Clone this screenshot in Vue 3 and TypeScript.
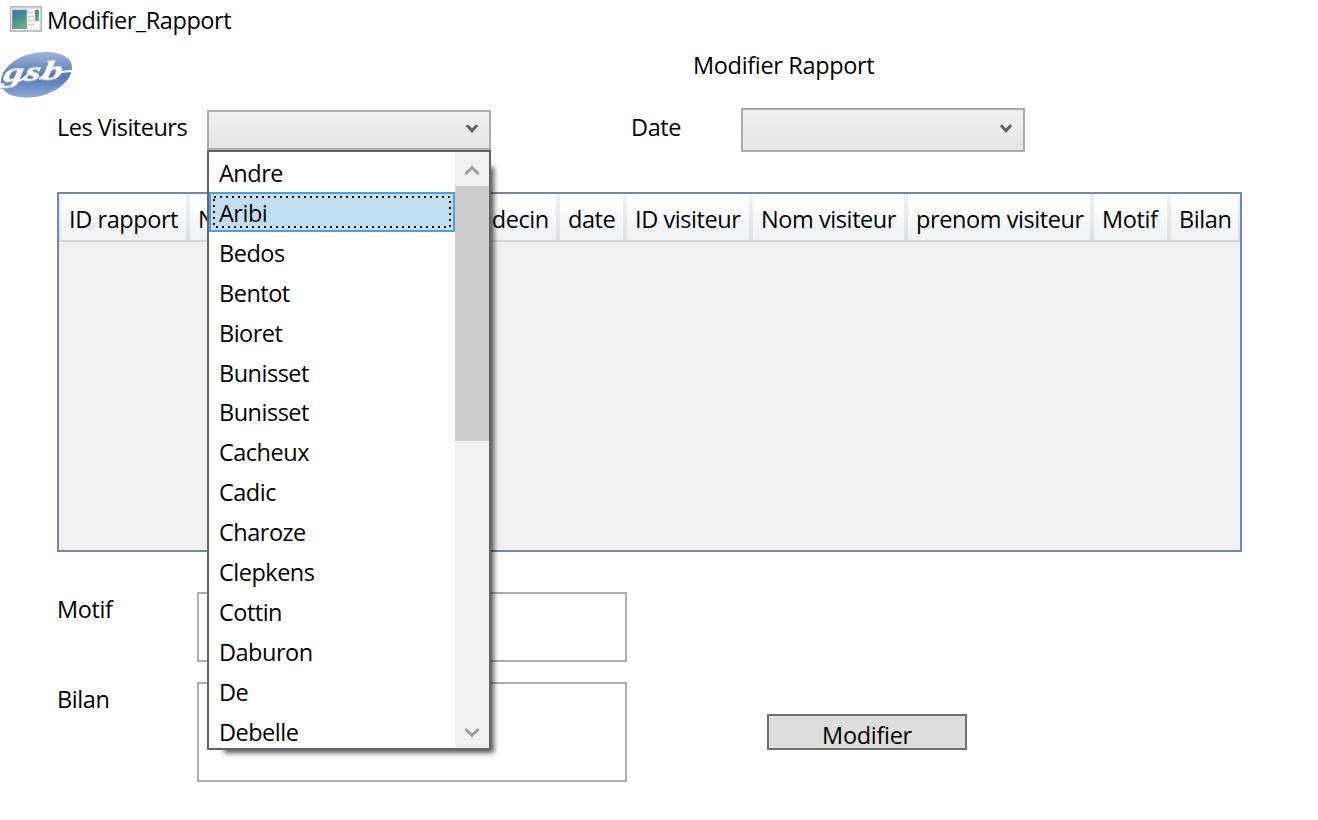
<script setup lang="ts">
import { ref } from 'vue'

interface Column {
  label: string
  width: number
}

const visitors: string[] = [
  'Andre', 'Aribi', 'Bedos', 'Bentot', 'Bioret', 'Bunisset', 'Bunisset', 'Cacheux',
  'Cadic', 'Charoze', 'Clepkens', 'Cottin', 'Daburon', 'De', 'Debelle',
]
const highlighted = ref<number>(1)

const columns: Column[] = [
  { label: 'ID rapport', width: 129 },
  { label: 'Nom medecin', width: 169 },
  { label: 'prenom medecin', width: 201 },
  { label: 'date', width: 67 },
  { label: 'ID visiteur', width: 126 },
  { label: 'Nom visiteur', width: 155 },
  { label: 'prenom visiteur', width: 186 },
  { label: 'Motif', width: 77 },
  { label: 'Bilan', width: 71 },
]
</script>

<template>
  <div class="window">
    <header class="titlebar">
      <svg class="app-icon" viewBox="0 0 32 26" width="32" height="26">
        <defs>
          <linearGradient id="pane" x1="0" y1="0" x2="0.5" y2="1">
            <stop offset="0" stop-color="#3c6fae" />
            <stop offset="0.5" stop-color="#47899c" />
            <stop offset="1" stop-color="#68b070" />
          </linearGradient>
        </defs>
        <rect x="0.75" y="0.75" width="30.5" height="24.5" fill="#dfe2e5" stroke="#b9bdc2" stroke-width="1.5" />
        <rect x="1.5" y="3" width="28" height="20.5" fill="#f5f6f6" />
        <rect x="2.5" y="4" width="14" height="18.5" fill="url(#pane)" stroke="#6b9bb0" stroke-width="0.8" />
        <path d="M18 6.5h6M18 10.5h6M18 14.5h6M18 18.5h6" stroke="#cfd2d5" stroke-width="1.3" />
        <rect x="25.2" y="4" width="3.6" height="11" fill="url(#pane)" />
      </svg>
      <span class="caption">Modifier_Rapport</span>
    </header>

    <div class="banner">
      <svg class="logo" viewBox="0 0 76 50" width="76" height="50">
        <defs>
          <linearGradient id="oval" x1="0" y1="0" x2="0" y2="1">
            <stop offset="0" stop-color="#9db5da" />
            <stop offset="0.55" stop-color="#5479b7" />
            <stop offset="1" stop-color="#8fa9d5" />
          </linearGradient>
        </defs>
        <path
          d="M1 31C2 16 21 2 45 2C62 2 72 8 72 17C72 34 49 47.500 27 47.500C10 47.500 0 41 1 31Z"
          fill="url(#oval)"
        />
        <g transform="translate(2.500 32) rotate(-3) skewX(-12) scale(1.5 1)">
          <text class="logo-text" x="0" y="0">gsb</text>
        </g>
        <path class="swash" d="M18 31Q24 30 31 21M39 29Q44 27 49 20M58 23Q62 21.500 73 21" />
      </svg>
      <h1>Modifier Rapport</h1>
    </div>

    <section class="filters">
      <label class="visitor-label">Les Visiteurs</label>
      <div class="picker">
        <div class="combo">
          <svg viewBox="0 0 12 10" width="12" height="10"><path d="M1 1.2L6 6.8L11 1.2" /></svg>
        </div>
        <div class="popup">
          <ul>
            <li
              v-for="(name, i) in visitors"
              :key="i"
              :class="{ active: i === highlighted }"
              @mouseenter="highlighted = i"
            >
              <svg v-if="i === highlighted" class="focus" width="238" height="32">
                <rect x="1" y="1" width="236" height="30" />
              </svg>
              <span>{{ name }}</span>
            </li>
          </ul>
          <div class="scrollbar">
            <svg viewBox="0 0 34 34" width="34" height="34"><path d="M10.5 22L17 15.5L23.5 22" /></svg>
            <div class="thumb"></div>
            <svg viewBox="0 0 34 34" width="34" height="34"><path d="M10.5 15L17 21.5L23.5 15" /></svg>
          </div>
        </div>
      </div>
      <label class="date-label">Date</label>
      <div class="combo date">
        <svg viewBox="0 0 12 10" width="12" height="10"><path d="M1 1.2L6 6.8L11 1.2" /></svg>
      </div>
    </section>

    <section class="grid">
      <div class="grid-head">
        <div v-for="c in columns" :key="c.label" class="cell" :style="{ width: c.width + 'px' }">
          {{ c.label }}
        </div>
      </div>
    </section>

    <section class="editor">
      <div class="fields">
        <label>Motif</label>
        <div class="box motif"></div>
        <label>Bilan</label>
        <div class="box bilan"></div>
      </div>
      <button type="button"><span>Modifier</span></button>
    </section>
  </div>
</template>

<style>
body {
  background: #fff;
  overflow: hidden;
}
</style>

<style scoped>
.window {
  box-sizing: border-box;
  width: 1318px;
  height: 820px;
  overflow: hidden;
  background: #fff;
  color: #000;
  font-family: "Open Sans", "Noto Sans", sans-serif;
  font-size: 23.5px;
  font-weight: 370;
  letter-spacing: -0.42px;
  line-height: 32px;
}
.titlebar {
  display: flex;
  height: 48px;
  padding: 6px 0 0 10px;
  box-sizing: border-box;
}
.caption {
  margin: -2px 0 0 5px;
}
.banner {
  display: flex;
  height: 60px;
}
.logo {
  margin-top: 2px;
}
.logo-text {
  font: italic bold 27px "Liberation Serif", serif;
  letter-spacing: 1px;
  fill: #fff;
  stroke: #fff;
  stroke-width: 0.4;
  filter: drop-shadow(0.6px 1px 0 #8b99b3);
}
.swash {
  fill: none;
  stroke: #fff;
  stroke-width: 2.2;
}
h1 {
  margin: 1px 0 0 617px;
  font-size: inherit;
  font-weight: inherit;
  letter-spacing: -0.34px;
}
.filters {
  display: grid;
  grid-template-columns: 150px 284px 140px 110px 284px;
  padding-left: 57px;
  height: 84px;
}
.visitor-label,
.date-label {
  padding-top: 3px;
}
.visitor-label {
  letter-spacing: -0.5px;
}
.date-label {
  grid-column: 4;
}
.picker {
  position: relative;
  padding-top: 2px;
}
.combo {
  box-sizing: border-box;
  display: flex;
  align-items: center;
  justify-content: flex-end;
  width: 284px;
  height: 40px;
  padding: 0 11px 2px 0;
  border: 2px solid #acacac;
  background: linear-gradient(#f0f0f0, #e5e5e5);
}
.combo.date {
  height: 44px;
}
.combo path {
  fill: none;
  stroke: #606060;
  stroke-width: 2.8;
}
.popup {
  position: absolute;
  z-index: 2;
  top: 42px;
  left: 0;
  box-sizing: border-box;
  display: flex;
  width: 284px;
  height: 600px;
  border: 2px solid #646464;
  background: #fff;
}
.popup::before {
  content: "";
  position: absolute;
  z-index: -1;
  inset: 12px -2px -2px 12px;
  box-shadow: 3px 3px 5px rgba(0, 0, 0, 0.65);
}
.popup ul {
  width: 246px;
  height: 596px;
  margin: 0;
  padding: 0;
  overflow: hidden;
  list-style: none;
  background: #fff;
  letter-spacing: -0.5px;
}
.popup li {
  position: relative;
  box-sizing: border-box;
  height: 39.92px;
  padding: 5px 10px 3px;
}
.popup li.active {
  background: #c1dff0;
  box-shadow: inset 0 0 0 2px #50a0d8;
}
.focus {
  position: absolute;
  left: 4px;
  top: 4px;
}
.focus rect {
  fill: none;
  stroke: #000;
  stroke-width: 2;
  stroke-dasharray: 2 4;
}
.scrollbar {
  display: flex;
  flex-direction: column;
  width: 34px;
  background: #f0f0f0;
}
.scrollbar path {
  fill: none;
  stroke: #a0a0a0;
  stroke-width: 3;
}
.thumb {
  height: 255px;
  margin-bottom: auto;
  background: #cdcdcd;
}
.grid {
  box-sizing: border-box;
  width: 1185px;
  height: 360px;
  margin-left: 57px;
  border: 2px solid #7089a8;
  background: #f0f0f0;
}
.grid-head {
  display: flex;
  height: 46px;
  border-bottom: 2px solid #d5d5d5;
  background: linear-gradient(#fff 0 19px, #f7f8fa 20px, #f1f2f4);
}
.cell {
  flex: none;
  box-sizing: border-box;
  padding: 9px 0 0 8px;
  border: solid;
  border-width: 0 2px;
  border-image: linear-gradient(#f2f2f2, #dedfe1) 1;
  white-space: nowrap;
}
.editor {
  display: flex;
  padding: 40px 0 0 57px;
}
.fields {
  display: grid;
  grid-template-columns: 140px 430px;
  row-gap: 20px;
}
.fields label {
  padding-top: 1px;
}
.box {
  box-sizing: border-box;
  border: 2px solid #abadb3;
  background: #fff;
}
.motif {
  height: 70px;
}
.bilan {
  height: 100px;
}
button {
  box-sizing: border-box;
  width: 200px;
  height: 36px;
  margin: 122px 0 0 140px;
  padding: 3px 0 0;
  overflow: hidden;
  border: 2px solid #707070;
  background: #ddd;
  color: #000;
  font: inherit;
  letter-spacing: -0.3px;
  text-align: center;
}
</style>
